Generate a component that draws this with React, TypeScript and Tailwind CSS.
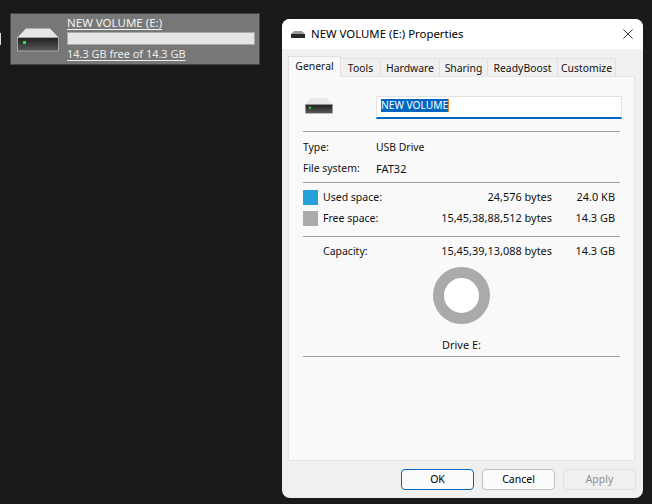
const font = { fontFamily: '"Noto Sans", "Open Sans", sans-serif' };

function DriveIcon({ small }: { small?: boolean }) {
  return (
    <svg
      viewBox="0 0 42 24"
      className={small ? "w-[28px] h-[16px]" : "w-[42px] h-[24px]"}
    >
      <defs>
        <linearGradient id={small ? "bodyS" : "bodyL"} x1="0" y1="0" x2="0" y2="1">
          <stop offset="0" stopColor="#1f1f1f" />
          <stop offset="1" stopColor="#5a5a5a" />
        </linearGradient>
      </defs>
      <path d="M9 0.5 L33 0.5 L41.5 9.5 L0.5 9.5 Z" fill="#e6e6e8" />
      <rect x="0.5" y="9.5" width="41" height="13.5" fill={`url(#${small ? "bodyS" : "bodyL"})`} stroke="#b4b4b4" strokeWidth="0.8" />
      <rect x="6" y="13" width="3" height="3" fill="#22ee22" />
    </svg>
  );
}

function Tab({ label, w, active }: { label: string; w: string; active?: boolean }) {
  return active ? (
    <div className={`${w} h-[21px] bg-[#f9f9f9] border border-b-0 border-[#dfdfdf] text-center leading-[19px] relative z-10 -mb-px`}>
      {label}
    </div>
  ) : (
    <div className={`${w} h-[18px] mt-[2px] bg-[#f0f0f0] border border-b-0 border-l-0 border-[#e0e0e0] text-center leading-[19px]`}>
      {label}
    </div>
  );
}

function Divider() {
  return <div className="h-px bg-[#a0a0a0] mr-[14px]" />;
}

function SpaceRow({ swatch, label, bytes, size }: { swatch?: string; label: string; bytes: string; size: string }) {
  return (
    <div className="flex items-center h-[15px]">
      <div className={`w-[15px] h-[15px] ${swatch ?? ""}`} />
      <span className="ml-[5px] text-[10.5px]">{label}</span>
      <span className="ml-auto">{bytes}</span>
      <span className="w-[63px] text-right">{size}</span>
    </div>
  );
}

function Button({ label, cls }: { label: string; cls: string }) {
  return (
    <div className={`w-[73px] h-[21px] rounded-[4px] border text-center leading-[19px] text-[10.5px] ${cls}`}>{label}</div>
  );
}

export default function App() {
  return (
    <div style={font} className="w-[652px] h-[504px] bg-[#191919] flex items-start overflow-hidden text-[10.95px] text-[#111] relative">
      <div className="absolute left-0 top-[33px] w-[1px] h-[12px] bg-[#d8d8d8]" />

      {/* drive tile */}
      <div className="ml-[10px] mt-[13px] w-[250px] h-[52px] bg-[#777777] border border-[#444] flex text-white">
        <div className="w-[56px] pl-[6px] pt-[14px] shrink-0">
          <DriveIcon />
        </div>
        <div className="flex-1 pr-[4px]">
          <div className="h-[18px] leading-[17px] text-[11.5px] underline underline-offset-2 text-[#f4f4f4]">NEW VOLUME (E:)</div>
          <div className="h-[13px] bg-[#e6e6e6] border border-[#aaa]" />
          <div className="h-[17px] leading-[17px] underline underline-offset-2 text-[#ececec]">14.3 GB free of 14.3 GB</div>
        </div>
      </div>

      {/* properties dialog */}
      <div className="ml-[22px] mt-[19px] w-[361px] h-[479px] rounded-[8px] overflow-hidden bg-[#f0f0f0] flex flex-col">
        <div className="h-[30px] bg-white flex items-center pl-[9px] pr-[10px] shrink-0">
          <svg viewBox="0 0 14 7" className="w-[14px] h-[7px]">
            <path d="M3 0 L11 0 L14 3 L0 3 Z" fill="#9a9a9a" />
            <rect y="3" width="14" height="4" fill="#2a2a2a" />
          </svg>
          <span className="ml-[6px] text-[11.4px] text-black">NEW VOLUME (E:) Properties</span>
          <svg viewBox="0 0 12 12" className="ml-auto w-[10px] h-[10px]">
            <path d="M0.5 0.5 L11.5 11.5 M11.5 0.5 L0.5 11.5" stroke="#222" strokeWidth="1.1" />
          </svg>
        </div>

        <div className="flex pl-[6px] pt-[7px] shrink-0 text-[10.4px]">
          <Tab label="General" w="w-[53px]" active />
          <Tab label="Tools" w="w-[40px]" />
          <Tab label="Hardware" w="w-[59px]" />
          <Tab label="Sharing" w="w-[48px]" />
          <Tab label="ReadyBoost" w="w-[70px]" />
          <Tab label="Customize" w="w-[58px]" />
        </div>

        <div className="mx-[6px] w-[347px] h-[385px] bg-[#f9f9f9] border border-[#e4e4e4] pl-[14px] shrink-0">
          <div className="flex h-[54px] pt-[19px]">
            <div className="w-[73px] pl-[2px] pt-[2px]">
              <DriveIcon small />
            </div>
            <div className="w-[246px] h-[23px] bg-white border border-[#e2e2e2] border-b-2 border-b-[#0067c0] pl-[4px] pt-[2px]">
              <span className="block w-fit bg-[#0067c0] text-white h-[13px] leading-[13px] text-[10.2px] border-r border-[#e8822a]">NEW VOLUME</span>
            </div>
          </div>

          <Divider />
          <div className="h-[5px]" />
          <div className="flex h-[21px] items-center text-[10.4px]">
            <span className="w-[73px]">Type:</span>
            <span>USB Drive</span>
          </div>
          <div className="flex h-[22px] items-center text-[10.4px]">
            <span className="w-[73px]">File system:</span>
            <span className="text-[11px]">FAT32</span>
          </div>
          <div className="h-[2px]" />
          <Divider />

          <div className="pr-[19px] pt-[7px]">
            <SpaceRow swatch="bg-[#26a0da]" label="Used space:" bytes="24,576 bytes" size="24.0 KB" />
            <div className="h-[6px]" />
            <SpaceRow swatch="bg-[#aaaaaa]" label="Free space:" bytes="15,45,38,88,512 bytes" size="14.3 GB" />
          </div>

          <div className="h-[10px]" />
          <Divider />

          <div className="pr-[19px] pt-[7px]">
            <SpaceRow label="Capacity:" bytes="15,45,39,13,088 bytes" size="14.3 GB" />
          </div>

          <div className="flex justify-center pr-[14px] pt-[8px]">
            <div className="w-[57px] h-[57px] rounded-full border-[11px] border-[#aaaaaa] bg-white" />
          </div>
          <div className="text-center pr-[14px] pt-[13px] leading-[15px]">Drive E:</div>
          <div className="h-[4px]" />
          <Divider />
        </div>

        <div className="flex justify-end gap-[8px] pr-[7px] pt-[8px]">
          <Button label="OK" cls="bg-[#fbfbfb] border-[#0067c0] text-black" />
          <Button label="Cancel" cls="bg-[#fbfbfb] border-[#c0c0c0] text-black" />
          <Button label="Apply" cls="bg-[#f0f0f0] border-[#e0e0e0] text-[#8f8f8f]" />
        </div>
      </div>
    </div>
  );
}
